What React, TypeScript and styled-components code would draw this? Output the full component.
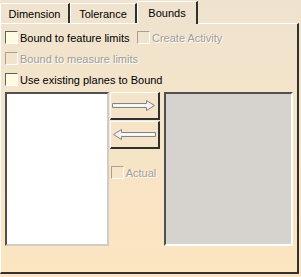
import React from 'react';
import styled, { createGlobalStyle, css } from 'styled-components';

const Global = createGlobalStyle`
    html, body {
        margin: 0;
        padding: 0;
        background: #fbe6c2;
    }
    * { box-sizing: border-box; }
`;

const Frame = styled.div`
    width: 301px;
    height: 277px;
    padding: 1px 2px 3px 0;
    display: flex;
    flex-direction: column;
    background: linear-gradient(#efe3cf, #fce5c0);
    font-family: "Liberation Sans", Arial, sans-serif;
    font-size: 11px;
    color: #000;
`;

const TabBar = styled.div`
    display: flex;
    align-items: flex-end;
    height: 22px;
`;

const Tab = styled.div<{ $active?: boolean; $w: number }>`
    width: ${p => p.$w}px;
    height: ${p => (p.$active ? 23 : 20)}px;
    border-top: 1px solid #fff;
    border-left: 1px solid #fff;
    border-right: 2px solid #303030;
    border-top-left-radius: 2px;
    display: flex;
    align-items: center;
    justify-content: center;
    padding-bottom: ${p => (p.$active ? 1 : 0)}px;
    margin-bottom: ${p => (p.$active ? -1 : 0)}px;
    position: relative;
    z-index: ${p => (p.$active ? 1 : 0)};
    ${p => p.$active && css`background: #efe3cf;`}
`;

const Panel = styled.div`
    flex: 1;
    border-top: 1px solid #fff;
    border-left: 1px solid #fff;
    border-right: 2px solid #303030;
    border-bottom: 2px solid #303030;
    padding: 3px 4px 0 4px;
    display: flex;
    flex-direction: column;
`;

const Row = styled.div`
    display: flex;
    align-items: center;
    height: 21px;
`;

const Check = styled.label<{ $disabled?: boolean; $w?: number }>`
    display: flex;
    align-items: center;
    gap: 2px;
    ${p => p.$w && css`width: ${p.$w}px;`}
    color: ${p => (p.$disabled ? '#a09c98' : '#000')};
    ${p => p.$disabled && css`text-shadow: 1px 1px 0 #fff;`}
    white-space: nowrap;
`;

const Box = styled.span<{ $disabled?: boolean }>`
    width: 13px;
    height: 13px;
    flex: none;
    border-top: 1px solid #606060;
    border-left: 1px solid #606060;
    border-right: 1px solid #fff;
    border-bottom: 1px solid #fff;
    background: ${p => (p.$disabled ? 'transparent' : '#fffbe0')};
    ${p => p.$disabled && css`
        border-top-color: #a8a098;
        border-left-color: #a8a098;
    `}
`;

const Lists = styled.div`
    display: flex;
    gap: 1px;
    margin-top: 2px;
    height: 154px;
`;

const ListBox = styled.div<{ $grey?: boolean }>`
    width: ${p => (p.$grey ? 129 : 104)}px;
    height: 100%;
    background: ${p => (p.$grey ? '#d6d2cd' : '#fff')};
    border-top: 2px solid #505050;
    border-left: 2px solid #505050;
    border-right: 2px solid ${p => (p.$grey ? '#fff' : '#d0ccc8')};
    border-bottom: 2px solid ${p => (p.$grey ? '#fff' : '#d0ccc8')};
`;

const Middle = styled.div`
    width: 54px;
    display: flex;
    flex-direction: column;
    gap: 1px;
`;

const ArrowButton = styled.div`
    width: 50px;
    height: 28px;
    border-top: 1px solid #fff;
    border-left: 1px solid #fff;
    border-right: 2px solid #303030;
    border-bottom: 2px solid #303030;
    display: flex;
    align-items: center;
    justify-content: center;
`;

const ActualRow = styled(Row)`
    margin-top: 12px;
    padding-left: 1px;
`;

const Arrow = ({ left }: { left?: boolean }) => (
    <svg width="44" height="11" viewBox="0 0 44 11" style={{ transform: left ? 'scaleX(-1)' : undefined }}>
        <path d="M0.5 3.5 H34.5 V0.5 L42.5 5.5 L34.5 10.5 V7.5 H0.5 Z" fill="#f4f2ef" stroke="#858585" strokeWidth="1" />
        <path d="M1.5 5.5 H36" stroke="#fff" strokeWidth="1" />
    </svg>
);

export default function App() {
    return (
        <>
            <Global />
            <Frame>
                <TabBar>
                    <Tab $w={70}>Dimension</Tab>
                    <Tab $w={67}>Tolerance</Tab>
                    <Tab $w={61} $active>Bounds</Tab>
                </TabBar>
                <Panel>
                    <Row>
                        <Check $w={132}><Box />Bound to feature limits</Check>
                        <Check $disabled><Box $disabled />Create Activity</Check>
                    </Row>
                    <Row>
                        <Check $disabled><Box $disabled />Bound to measure limits</Check>
                    </Row>
                    <Row>
                        <Check><Box />Use existing planes to Bound</Check>
                    </Row>
                    <Lists>
                        <ListBox />
                        <Middle>
                            <ArrowButton><Arrow /></ArrowButton>
                            <ArrowButton><Arrow left /></ArrowButton>
                            <ActualRow>
                                <Check $disabled><Box $disabled />Actual</Check>
                            </ActualRow>
                        </Middle>
                        <ListBox $grey />
                    </Lists>
                </Panel>
            </Frame>
        </>
    );
}
